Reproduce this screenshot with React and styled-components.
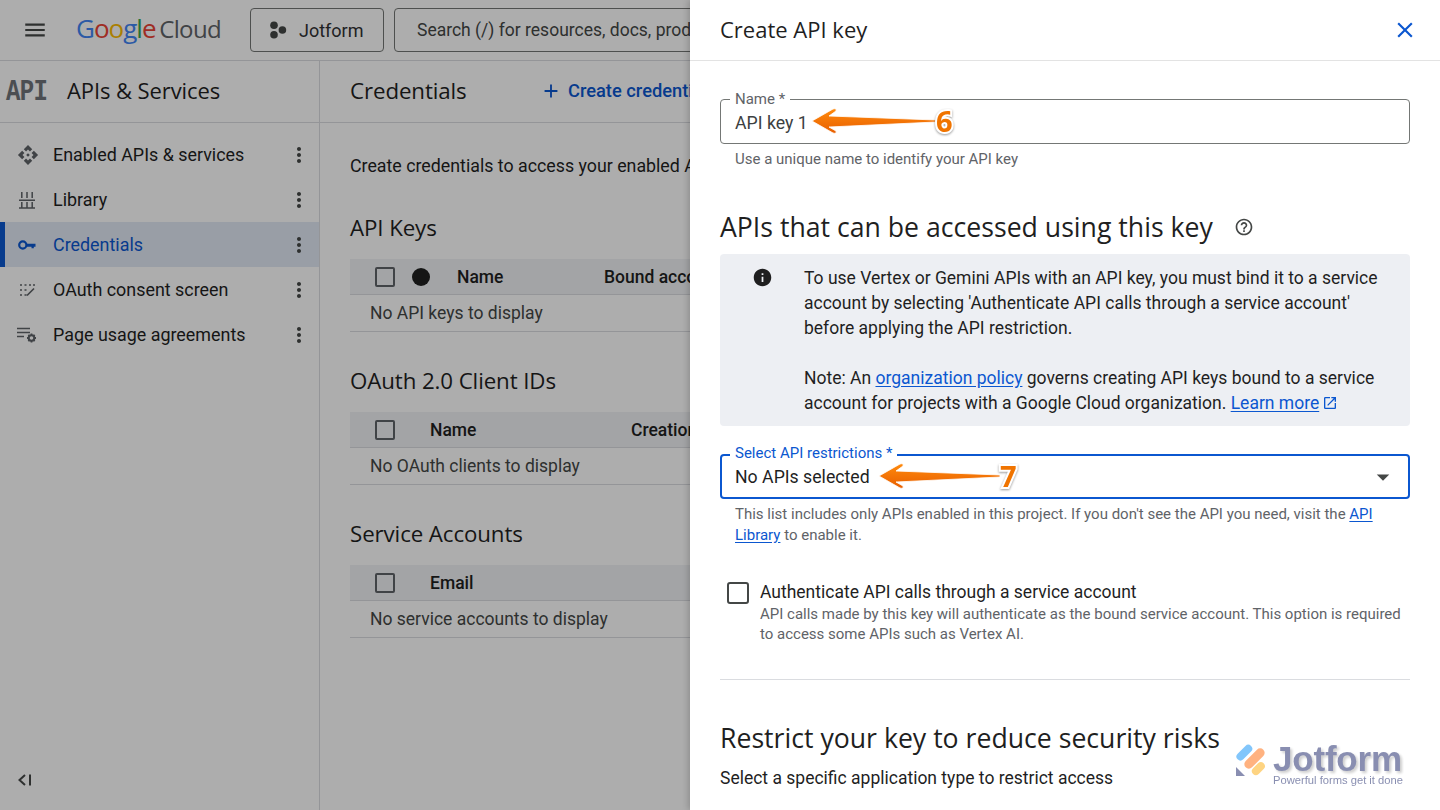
import React from "react";
import styled, { createGlobalStyle } from "styled-components";
import { MdMenu, MdMoreVert, MdAdd, MdClose, MdHelpOutline, MdInfo, MdOpenInNew, MdArrowDropDown, MdApi } from "react-icons/md";

const GlobalStyle = createGlobalStyle`
  html, body { margin: 0; padding: 0; height: 100%; background: #fff; }
  * { box-sizing: border-box; }
  body { font-family: Roboto, "Liberation Sans", sans-serif; color: #1f1f1f; }
`;

const TITLE_FONT = `"Open Sans", Roboto, sans-serif`;

// Page behind the drawer
const Page = styled.div`
  position: relative;
  width: 1440px;
  height: 810px;
  overflow: hidden;
  background: #fff;
`;

const TopBar = styled.header`
  height: 61px;
  display: flex;
  align-items: center;
  padding: 0 10px 0 22px;
  border-bottom: 1px solid #dadce0;
  white-space: nowrap;
`;

const Logo = styled.div`
  margin-left: 28px;
  width: 174px;
  padding-bottom: 4px;
  font-family: ${TITLE_FONT};
  font-size: 24px;
  letter-spacing: -0.6px;
  color: #5f6368;
`;

const LogoWord = styled.span`
  margin-right: -2px;
  font-size: 26px;
  font-weight: 500;
  letter-spacing: -1px;
`;

const LogoLetter = styled.span`
  color: ${(p) => p.$color};
`;

const ProjectButton = styled.div`
  width: 134px;
  height: 44px;
  display: flex;
  align-items: center;
  gap: 11px;
  padding-left: 17px;
  border: 1px solid #747775;
  border-radius: 4px;
  font-size: 18px;
  color: #303134;
`;

const SearchBox = styled.div`
  width: 700px;
  height: 44px;
  margin-left: 10px;
  padding-left: 22px;
  display: flex;
  align-items: center;
  border: 1px solid #747775;
  border-radius: 4px;
  font-size: 17.500px;
  color: #444746;
`;

const Columns = styled.div`
  display: flex;
  height: 749px;
`;

const Sidebar = styled.aside`
  width: 320px;
  display: flex;
  flex-direction: column;
  border-right: 1px solid #dadce0;
`;

const SideHead = styled.div`
  height: 62px;
  display: flex;
  align-items: center;
  padding: 0 0 4px 6px;
  border-bottom: 1px solid #dadce0;
  margin-bottom: 9px;
`;

const ApiMark = styled.span`
  display: inline-block;
  width: 61px;
  font-family: "Liberation Mono", monospace;
  font-weight: 700;
  font-size: 24px;
  letter-spacing: -0.6px;
  color: #6f7479;
  transform: translateY(3px) scaleY(1.2);
  transform-origin: 0 50%;
`;

const SideTitle = styled.div`
  font-family: ${TITLE_FONT};
  font-size: 22px;
  letter-spacing: -0.1px;
`;

const NavRow = styled.div`
  height: 45px;
  display: flex;
  align-items: center;
  padding: 0 8px 0 ${(p) => (p.$active ? "12px" : "17px")};
  font-size: 17.900px;
  color: ${(p) => (p.$active ? "#0b57d0" : "#1f1f1f")};
  background: ${(p) => (p.$active ? "#e2e9f5" : "transparent")};
  border-left: ${(p) => (p.$active ? "5px solid #0b57d0" : "0")};
`;

const NavIcon = styled.span`
  width: 36px;
  height: 20px;
  display: flex;
  align-items: center;
  color: ${(p) => (p.$active ? "#0b57d0" : "#5f6368")};
`;

const NavLabel = styled.span`
  flex: 1;
`;

const Main = styled.main`
  flex: 1;
  display: flex;
  flex-direction: column;
  min-width: 0;
`;

const MainHead = styled.div`
  height: 62px;
  display: flex;
  align-items: center;
  padding: 0 0 2px 30px;
  border-bottom: 1px solid #dadce0;
  white-space: nowrap;
`;

const MainTitle = styled.div`
  width: 190px;
  font-family: ${TITLE_FONT};
  font-size: 22.300px;
  letter-spacing: -0.1px;
`;

const CreateLink = styled.div`
  display: flex;
  align-items: center;
  gap: 6px;
  font-size: 18.300px;
  font-weight: 500;
  color: #0b57d0;
`;

const MainBody = styled.div`
  padding: 31px 30px 0;
  white-space: nowrap;
`;

const Intro = styled.p`
  margin: 0;
  padding-bottom: 1px;
  font-size: 17.800px;
  line-height: 24px;
`;

const SectionTitle = styled.h2`
  margin: 33px 0 15px;
  height: 32px;
  line-height: 32px;
  font-family: ${TITLE_FONT};
  font-weight: 400;
  font-size: 22.300px;
  letter-spacing: -0.1px;
`;

const TableHead = styled.div`
  height: 36px;
  display: flex;
  align-items: center;
  padding-left: 25px;
  background: #f0f2f5;
  border-bottom: 1px solid #dadce0;
  font-size: 17.500px;
  font-weight: 500;
`;

const RowCheck = styled.span`
  width: 20px;
  height: 20px;
  border: 2px solid #5f6368;
  border-radius: 2px;
  flex: none;
`;

const Dot = styled.span`
  width: 18px;
  height: 18px;
  margin-left: 17px;
  border-radius: 50%;
  background: #1f1f1f;
  flex: none;
`;

const Cell = styled.span`
  flex: none;
  width: ${(p) => p.$w}px;
  margin-left: ${(p) => p.$ml || 0}px;
`;

const EmptyRow = styled.div`
  height: 37px;
  display: flex;
  align-items: center;
  padding-left: 20px;
  border-bottom: 1px solid #dadce0;
  font-size: 17.500px;
  color: #444746;
`;

const CollapseMark = styled.div`
  position: absolute;
  left: 17px;
  bottom: 22px;
  display: flex;
  color: #444746;
`;

const Scrim = styled.div`
  position: absolute;
  inset: 0;
  background: rgba(0, 0, 0, 0.32);
`;

// Drawer
const Drawer = styled.aside`
  position: absolute;
  top: 0;
  right: 0;
  bottom: 0;
  width: 750px;
  background: #fff;
  overflow: hidden;
  box-shadow: -2px 0 6px rgba(0, 0, 0, 0.18);
`;

const DrawerHead = styled.div`
  height: 61px;
  display: flex;
  align-items: center;
  justify-content: space-between;
  padding: 0 22px 0 30px;
  border-bottom: 1px solid #e3e3e3;
`;

const DrawerTitle = styled.div`
  padding-bottom: 2px;
  font-family: ${TITLE_FONT};
  font-size: 22px;
`;

const CloseIcon = styled(MdClose)`
  color: #0b57d0;
`;

const DrawerBody = styled.div`
  padding: 38px 30px 0;
`;

const Field = styled.div`
  position: relative;
  height: 45px;
  margin-top: ${(p) => p.$top || 0}px;
  display: flex;
  align-items: center;
  justify-content: space-between;
  padding: ${(p) => (p.$focus ? "1px 10px 0 13px" : "2px 15px 0 14px")};
  border: ${(p) => (p.$focus ? "2px solid #0b57d0" : "1px solid #747775")};
  border-radius: 4px;
  font-size: 17.700px;
  color: ${(p) => (p.$focus ? "#1f1f1f" : "#3c3f41")};
`;

const FieldLabel = styled.label`
  position: absolute;
  top: ${(p) => (p.$focus ? "-11px" : "-9px")};
  left: ${(p) => (p.$focus ? "8px" : "9px")};
  padding: 0 5px;
  background: #fff;
  font-size: 15px;
  line-height: 16px;
  color: ${(p) => (p.$focus ? "#0b57d0" : "#5f6368")};
`;

const Helper = styled.div`
  margin: 5px 0 0 15px;
  font-size: 15px;
  line-height: 21px;
  color: #5f6368;
`;

const HeadingRow = styled.div`
  display: flex;
  align-items: center;
  gap: 21px;
  margin-top: 37px;
`;

const Heading = styled.h2`
  margin: 0;
  font-family: ${TITLE_FONT};
  font-weight: 400;
  font-size: 26.650px;
  line-height: 40px;
`;

const InfoBox = styled.div`
  display: flex;
  margin-top: 7px;
  height: 172px;
  padding: 12px 30px 0 32px;
  background: #edeff3;
  border-radius: 4px;
`;

const InfoIcon = styled.div`
  width: 52px;
  padding-top: 1px;
  flex: none;
  display: flex;
  color: #1f1f1f;
`;

const InfoText = styled.div`
  font-size: 17.500px;
  line-height: 25px;
`;

const Paragraph = styled.p`
  margin: 0 0 25px;
`;

const Link = styled.a`
  color: #0b57d0;
  text-decoration: underline;
  text-underline-offset: 2px;
`;

const ExternalIcon = styled(MdOpenInNew)`
  vertical-align: -2px;
  margin-left: 3px;
  color: #0b57d0;
`;

const CheckRow = styled.div`
  display: flex;
  gap: 11px;
  margin: 35px 0 0 7px;
`;

const CheckBox = styled.span`
  width: 22px;
  height: 22px;
  margin-top: 1px;
  border: 2px solid #444746;
  border-radius: 3px;
  flex: none;
`;

const CheckLabel = styled.div`
  margin-bottom: 1px;
  font-size: 17.500px;
  line-height: 22px;
`;

const CheckHelp = styled.div`
  font-size: 15px;
  line-height: 20px;
  color: #5f6368;
`;

const Divider = styled.hr`
  margin: 35px 0 0;
  border: 0;
  border-top: 1px solid #dadce0;
`;

const LowerHeading = styled(Heading)`
  margin-top: 38px;
`;

const LowerText = styled.div`
  margin-top: 9px;
  font-size: 17.500px;
  line-height: 22px;
`;

// Tutorial overlays
const Callout = styled.div`
  position: absolute;
  left: ${(p) => p.$x}px;
  top: ${(p) => p.$y}px;
  display: flex;
  align-items: center;
`;

const CalloutNumber = styled.span`
  font-family: "Open Sans", sans-serif;
  font-weight: 700;
  font-size: 29px;
  line-height: 30px;
  color: #f07400;
  -webkit-text-stroke: 4px #fff;
  paint-order: stroke fill;
  filter: drop-shadow(0 1px 1px rgba(0, 0, 0, 0.4));
`;

const Watermark = styled.div`
  position: absolute;
  left: 1236px;
  top: 743px;
  display: flex;
  gap: 4px;
  opacity: 0.95;
`;

const WatermarkText = styled.div`
  display: flex;
  flex-direction: column;
  font-family: "Liberation Sans", sans-serif;
  color: #8389ad;
`;

const WatermarkName = styled.div`
  font-size: 35px;
  line-height: 32px;
  font-weight: 700;
  letter-spacing: -0.2px;
  text-shadow: 2px 2px 3px rgba(0, 0, 0, 0.22);
`;

const WatermarkTag = styled.div`
  font-size: 11.200px;
  line-height: 11px;
`;

// Drawn icons
const ProjectIcon = () => (
  <svg width="20" height="20" viewBox="0 0 20 20" fill="#444746">
    <circle cx="6" cy="5.200" r="3.800" />
    <circle cx="6" cy="14.800" r="3.800" />
    <circle cx="14.400" cy="10" r="3.800" />
  </svg>
);

const LibraryIcon = () => (
  <svg width="20" height="20" viewBox="0 0 20 20" fill="none" stroke="currentColor" strokeWidth="1.500">
    <path d="M2 10.200h16M2 18h16M4.800 2v6M10 2v6M15.200 2v6M4.800 12v6M10 12v6M15.200 12v6" />
  </svg>
);

const KeyIcon = () => (
  <svg width="20" height="20" viewBox="0 0 20 20" fill="none">
    <circle cx="5.800" cy="10" r="3.600" stroke="currentColor" strokeWidth="2.200" />
    <path d="M9.500 8.700h9v3h-1.700v1.600h-2.300v-1.600h-5z" fill="currentColor" />
  </svg>
);

const ConsentIcon = () => (
  <svg width="20" height="20" viewBox="0 0 20 20" fill="none" stroke="currentColor" strokeWidth="1.700">
    <path d="M3 5h2M7.500 5h2M12 5h2M16 5h2M3 10h2M7.500 10h2M3 15h2M7.500 15h2M10 15.500l7-7" />
  </svg>
);

const UsageIcon = () => (
  <svg width="20" height="20" viewBox="0 0 20 20" fill="none" stroke="currentColor">
    <path d="M0 3.500h13M0 7.500h13M0 11.500h7" strokeWidth="1.500" />
    <circle cx="14.500" cy="13" r="2.800" strokeWidth="2" />
    <path d="M14.500 8.500v2M14.500 15.500v2M10 13h2M17 13h2M11.300 9.800l1.400 1.400M16.300 14.800l1.400 1.400M17.700 9.800l-1.400 1.400M12.700 14.800l-1.400 1.400" strokeWidth="1.800" />
  </svg>
);

const CollapseIcon = () => (
  <svg width="16" height="16" viewBox="0 0 16 16" fill="none" stroke="currentColor" strokeWidth="2">
    <path d="M8 3L2.500 8 8 13M13 2.500v11" />
  </svg>
);

const CalloutArrow = ({ width }) => (
  <svg width={width} height="26" viewBox={`0 0 ${width} 26`}>
    <defs>
      <linearGradient id="arrowFill" x1="0" y1="0" x2="0" y2="1">
        <stop offset="0" stopColor="#ff8a0c" />
        <stop offset="1" stopColor="#e85f00" />
      </linearGradient>
    </defs>
    <path
      d={`M1 13 L22 1 Q26 0 25 3 L18 8 L${width} 12 L${width} 14 L18 19 L25 23 Q26 26 22 25 Z`}
      fill="url(#arrowFill)"
      stroke="#fff"
      strokeWidth="0.800"
    />
  </svg>
);

const WatermarkLogo = () => (
  <svg width="33" height="34" viewBox="0 0 33 34">
    <rect x="-1" y="6" width="19" height="8" rx="4" fill="#7cc4fb" transform="rotate(-45 8 10)" />
    <rect x="6" y="11" width="25" height="9" rx="4.500" fill="#ffae7a" transform="rotate(-45 18.500 15.500)" />
    <rect x="15" y="22" width="15" height="8" rx="4" fill="#fed27c" transform="rotate(-45 22 26)" />
    <path d="M0 24l9 9H0z" fill="#8389ad" />
  </svg>
);

const navItems = [
  { label: "Enabled APIs & services", icon: <MdApi size={22} /> },
  { label: "Library", icon: <LibraryIcon /> },
  { label: "Credentials", icon: <KeyIcon />, active: true },
  { label: "OAuth consent screen", icon: <ConsentIcon /> },
  { label: "Page usage agreements", icon: <UsageIcon /> },
];

const logoLetters = [
  ["G", "#4285f4"],
  ["o", "#ea4335"],
  ["o", "#fbbc05"],
  ["g", "#4285f4"],
  ["l", "#34a853"],
  ["e", "#ea4335"],
];

export default function App() {
  return (
    <Page>
      <GlobalStyle />
      <TopBar>
        <MdMenu size={26} color="#444746" />
        <Logo>
          <LogoWord>
            {logoLetters.map(([letter, color], i) => (
              <LogoLetter key={i} $color={color}>{letter}</LogoLetter>
            ))}
          </LogoWord>{" "}
          Cloud
        </Logo>
        <ProjectButton>
          <ProjectIcon />
          Jotform
        </ProjectButton>
        <SearchBox>Search (/) for resources, docs, products, and more</SearchBox>
      </TopBar>

      <Columns>
        <Sidebar>
          <SideHead>
            <ApiMark>API</ApiMark>
            <SideTitle>APIs &amp; Services</SideTitle>
          </SideHead>
          {navItems.map((item) => (
            <NavRow key={item.label} $active={item.active}>
              <NavIcon $active={item.active}>{item.icon}</NavIcon>
              <NavLabel>{item.label}</NavLabel>
              <MdMoreVert size={24} color="#444746" />
            </NavRow>
          ))}
        </Sidebar>

        <Main>
          <MainHead>
            <MainTitle>Credentials</MainTitle>
            <CreateLink>
              <MdAdd size={22} />
              Create credentials
            </CreateLink>
          </MainHead>
          <MainBody>
            <Intro>Create credentials to access your enabled APIs. Learn more</Intro>

            <SectionTitle>API Keys</SectionTitle>
            <TableHead>
              <RowCheck />
              <Dot />
              <Cell $w={147} $ml={27}>Name</Cell>
              <Cell $w={200}>Bound account</Cell>
            </TableHead>
            <EmptyRow>No API keys to display</EmptyRow>

            <SectionTitle>OAuth 2.0 Client IDs</SectionTitle>
            <TableHead>
              <RowCheck />
              <Cell $w={201} $ml={35}>Name</Cell>
              <Cell $w={200}>Creation date</Cell>
            </TableHead>
            <EmptyRow>No OAuth clients to display</EmptyRow>

            <SectionTitle>Service Accounts</SectionTitle>
            <TableHead>
              <RowCheck />
              <Cell $w={201} $ml={35}>Email</Cell>
            </TableHead>
            <EmptyRow>No service accounts to display</EmptyRow>
          </MainBody>
        </Main>
      </Columns>

      <CollapseMark>
        <CollapseIcon />
      </CollapseMark>

      <Scrim />

      <Drawer>
        <DrawerHead>
          <DrawerTitle>Create API key</DrawerTitle>
          <CloseIcon size={26} />
        </DrawerHead>
        <DrawerBody>
          <Field>
            <FieldLabel>Name *</FieldLabel>
            API key 1
          </Field>
          <Helper>Use a unique name to identify your API key</Helper>

          <HeadingRow>
            <Heading>APIs that can be accessed using this key</Heading>
            <MdHelpOutline size={20} color="#444746" />
          </HeadingRow>

          <InfoBox>
            <InfoIcon>
              <MdInfo size={21} />
            </InfoIcon>
            <InfoText>
              <Paragraph>
                To use Vertex or Gemini APIs with an API key, you must bind it to a service account by selecting
                'Authenticate API calls through a service account' before applying the API restriction.
              </Paragraph>
              Note: An <Link>organization policy</Link> governs creating API keys bound to a service account for
              projects with a Google Cloud organization. <Link>Learn more</Link>
              <ExternalIcon size={16} />
            </InfoText>
          </InfoBox>

          <Field $focus $top={28}>
            <FieldLabel $focus>Select API restrictions *</FieldLabel>
            No APIs selected
            <MdArrowDropDown size={30} color="#444746" />
          </Field>
          <Helper>
            This list includes only APIs enabled in this project. If you don't see the API you need, visit the{" "}
            <Link>API Library</Link> to enable it.
          </Helper>

          <CheckRow>
            <CheckBox />
            <div>
              <CheckLabel>Authenticate API calls through a service account</CheckLabel>
              <CheckHelp>
                API calls made by this key will authenticate as the bound service account. This option is required to
                access some APIs such as Vertex AI.
              </CheckHelp>
            </div>
          </CheckRow>

          <Divider />

          <LowerHeading>Restrict your key to reduce security risks</LowerHeading>
          <LowerText>Select a specific application type to restrict access</LowerText>
        </DrawerBody>
      </Drawer>

      <Callout $x={811} $y={106}>
        <CalloutArrow width={125} />
        <CalloutNumber>6</CalloutNumber>
      </Callout>
      <Callout $x={878} $y={461}>
        <CalloutArrow width={122} />
        <CalloutNumber>7</CalloutNumber>
      </Callout>

      <Watermark>
        <WatermarkLogo />
        <WatermarkText>
          <WatermarkName>Jotform</WatermarkName>
          <WatermarkTag>Powerful forms get it done</WatermarkTag>
        </WatermarkText>
      </Watermark>
    </Page>
  );
}
